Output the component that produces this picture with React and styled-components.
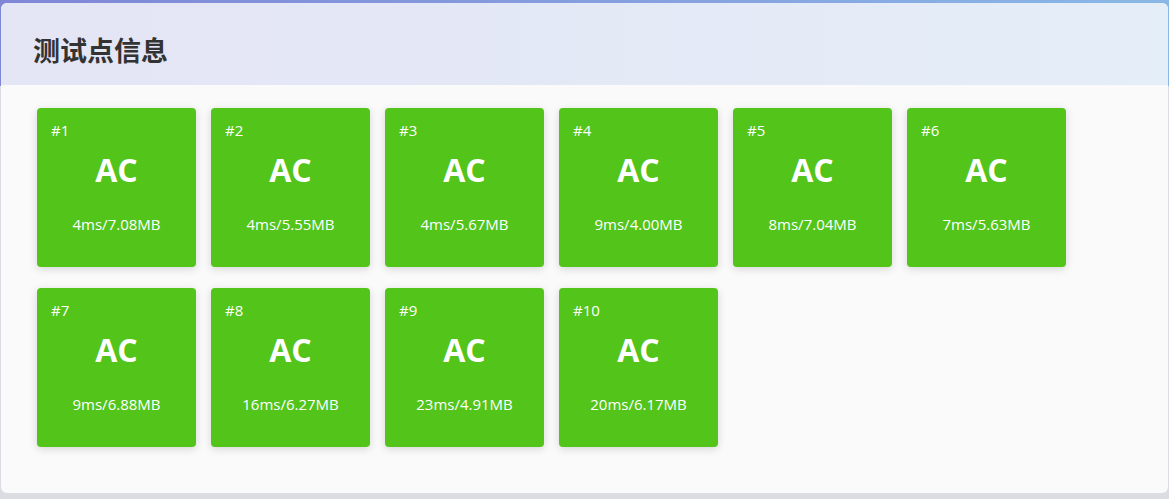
import React from "react";
import styled, { createGlobalStyle } from "styled-components";

const GlobalStyle = createGlobalStyle`
  html, body {
    margin: 0;
    padding: 0;
  }
  body {
    font-family: "Open Sans", "Noto Sans", "Noto Sans CJK SC", sans-serif;
  }
`;

const Page = styled.div`
  width: 1169px;
  height: 499px;
  box-sizing: border-box;
  padding: 3px 1px 6px 1px;
  background:
    linear-gradient(90deg, #7f86d6 0%, #86a3e0 60%, #8ab8e6 100%) top / 100% 86px no-repeat,
    #dcdde2;
  overflow: hidden;
`;

const Panel = styled.section`
  height: 100%;
  border-radius: 6px;
  overflow: hidden;
  background: #fafafa;
  display: flex;
  flex-direction: column;
`;

const PanelHeader = styled.header`
  height: 82px;
  flex-shrink: 0;
  box-sizing: border-box;
  padding: 10px 32px 0;
  display: flex;
  align-items: center;
  background: linear-gradient(90deg, #e4e5f5 0%, #e4e9f6 50%, #e4eef8 100%);
`;

const Title = styled.h2`
  margin: 0;
  font-family: "Noto Sans CJK SC", "Noto Sans", sans-serif;
  font-size: 27px;
  font-weight: 700;
  color: #333;
`;

const CaseGrid = styled.div`
  display: grid;
  grid-template-columns: repeat(6, 159px);
  column-gap: 15px;
  row-gap: 21px;
  padding: 23px 36px;
`;

const CaseTile = styled.div`
  height: 159px;
  box-sizing: border-box;
  padding: 12px 14px 0;
  border-radius: 4px;
  background: ${(p) => (p.status === "AC" ? "#52c41a" : "#ff4d4f")};
  color: #fff;
  box-shadow: 0 2px 8px rgba(0, 0, 0, 0.15);
  display: flex;
  flex-direction: column;
`;

const CaseNo = styled.div`
  font-size: 15px;
  line-height: 20px;
  font-weight: 500;
`;

const CaseStatus = styled.div`
  margin-top: 10px;
  font-size: 32px;
  line-height: 40px;
  font-weight: 700;
  text-align: center;
`;

const CaseUsage = styled.div`
  margin-top: 24px;
  font-size: 15px;
  line-height: 20px;
  font-weight: 500;
  text-align: center;
`;

const cases = [
  { time: 4, mem: "7.08" },
  { time: 4, mem: "5.55" },
  { time: 4, mem: "5.67" },
  { time: 9, mem: "4.00" },
  { time: 8, mem: "7.04" },
  { time: 7, mem: "5.63" },
  { time: 9, mem: "6.88" },
  { time: 16, mem: "6.27" },
  { time: 23, mem: "4.91" },
  { time: 20, mem: "6.17" },
];

const App = () => {
  return (
    <>
      <GlobalStyle />
      <Page>
        <Panel>
          <PanelHeader>
            <Title>测试点信息</Title>
          </PanelHeader>
          <CaseGrid>
            {cases.map((c, i) => (
              <CaseTile key={i} status="AC">
                <CaseNo>#{i + 1}</CaseNo>
                <CaseStatus>AC</CaseStatus>
                <CaseUsage>
                  {c.time}ms/{c.mem}MB
                </CaseUsage>
              </CaseTile>
            ))}
          </CaseGrid>
        </Panel>
      </Page>
    </>
  );
};

export default App;
